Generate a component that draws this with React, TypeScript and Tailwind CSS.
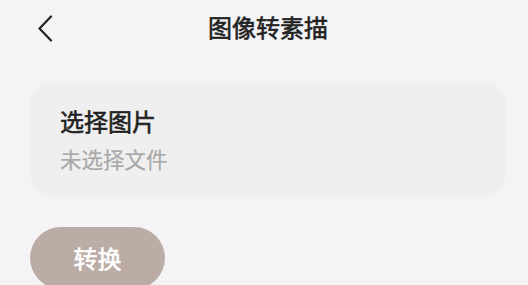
import React from 'react'

const App = () => {
    return (
        <div className="min-h-screen w-full bg-[#f4f4f6] pl-[30px] pr-[22px] font-['Noto_Sans_CJK_SC','Noto_Sans',sans-serif]">
            <div className="relative flex h-[54px] items-center justify-center">
                <button className="absolute left-[5px] top-[14px] flex h-[28px] w-[20px] items-center justify-center">
                    <svg width="16" height="27" viewBox="0 0 16 27" fill="none">
                        <path d="M14 1.5 L2.5 13.5 L14 25.5" stroke="#222222" strokeWidth="2.2" strokeLinecap="round" strokeLinejoin="round" />
                    </svg>
                </button>
                <h1 className="text-[24px] font-normal leading-[32px] text-[#222222] [-webkit-text-stroke:0.6px_#222222]">
                    图像转素描
                </h1>
            </div>
            <div className="mt-[27px] rounded-[24px] bg-[#efefef] px-[30px] pt-[24px] pb-[24px]">
                <div className="text-[24px] font-normal leading-[32px] text-[#1f1f1f] [-webkit-text-stroke:0.6px_#1f1f1f]">选择图片</div>
                <div className="mt-[8px] text-[21.5px] leading-[28px] text-[#a8a8a8] [-webkit-text-stroke:0.2px_#a8a8a8]">未选择文件</div>
            </div>
            <button className="mt-[30px] flex h-[62px] w-[135px] items-center justify-center rounded-full bg-[#bcaca6] text-[24px] font-normal text-white [-webkit-text-stroke:0.6px_#ffffff]">
                转换
            </button>
        </div>
    )
}

export default App
